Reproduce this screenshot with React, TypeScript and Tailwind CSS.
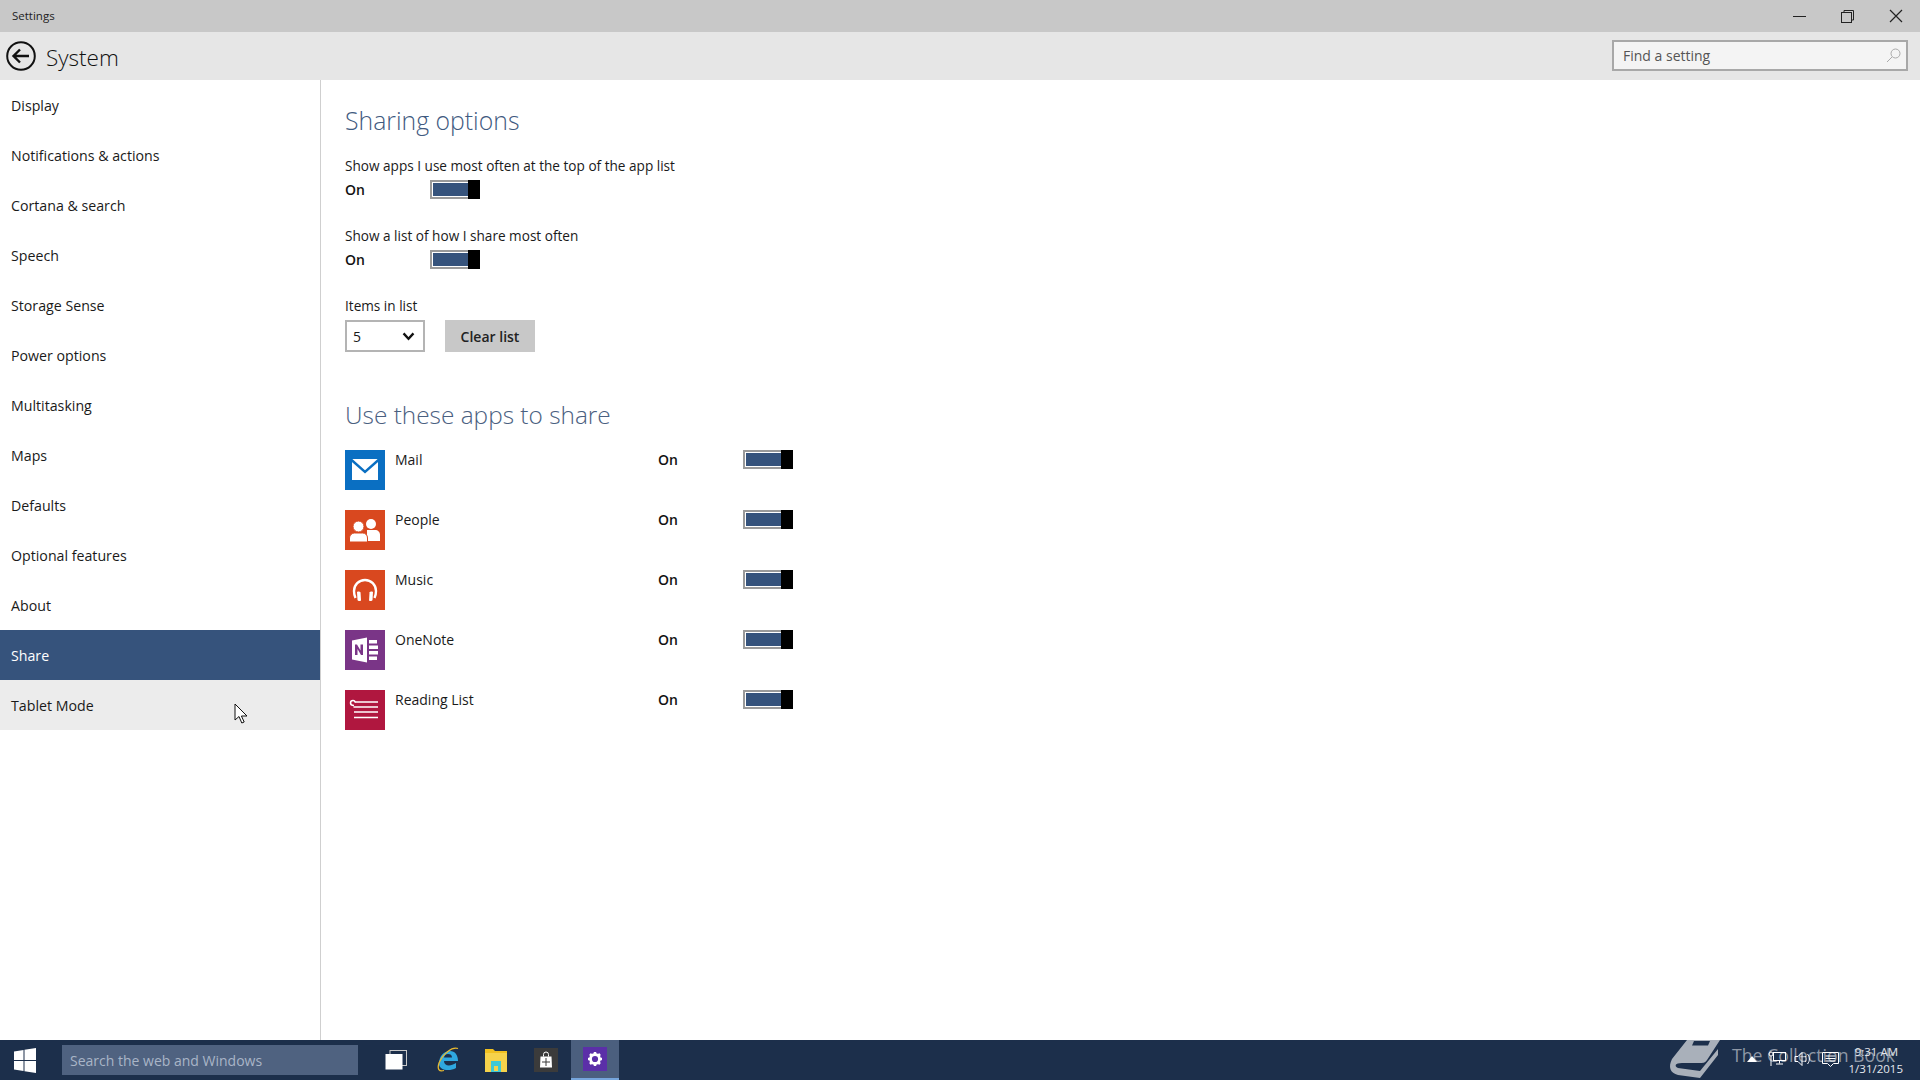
import React from "react";

const font = { fontFamily: '"Open Sans", "Noto Sans", sans-serif' };

const nav = ["Display","Notifications & actions","Cortana & search","Speech","Storage Sense","Power options","Multitasking","Maps","Defaults","Optional features","About","Share","Tablet Mode"];

function Toggle() {
  return (
    <div className="relative w-[50px] h-[19px] border-2 border-[#9a9a9a] bg-white p-[1px]">
      <div className="h-full w-full bg-[#36537c]" />
      <div className="absolute right-[-2px] top-[-2px] w-[12px] h-[19px] bg-black" />
    </div>
  );
}

function MailIcon() {
  return (
    <svg viewBox="0 0 40 40" className="w-10 h-10 block">
      <rect width="40" height="40" fill="#0a6fc2" />
      <rect x="7" y="9" width="26" height="21" fill="#fff" />
      <path d="M6 9.500l14 12.500 14-12.500" fill="none" stroke="#0a6fc2" strokeWidth="2.400" />
    </svg>
  );
}
function PeopleIcon() {
  return (
    <svg viewBox="0 0 40 40" className="w-10 h-10 block">
      <rect width="40" height="40" fill="#d9481f" />
      <circle cx="26" cy="14" r="5" fill="#fff" />
      <path d="M22 20h8c3 0 5 2 5 5v6H22z" fill="#fff" />
      <circle cx="13.500" cy="16.500" r="5.500" stroke="#d9481f" strokeWidth="1" fill="#fff" />
      <path d="M4.500 32v-4c0-3 2.500-5 5-5h8c3 0 5 2 5 5v4z" stroke="#d9481f" strokeWidth="1" fill="#fff" />
    </svg>
  );
}
function MusicIcon() {
  return (
    <svg viewBox="0 0 40 40" className="w-10 h-10 block">
      <rect width="40" height="40" fill="#d9481f" />
      <path d="M10.500 28c-1-2-1.500-4-1.500-7a11 11 0 0 1 22 0c0 3-.5 5-1.500 7" fill="none" stroke="#fff" strokeWidth="2.400" />
      <path d="M12 22c1.500-.8 3-.5 3.500.5l.5 8c-1.500 1-3 .5-3.500-.5z" fill="#fff" />
      <path d="M28 22c-1.500-.8-3-.5-3.500.5l-.5 8c1.500 1 3 .5 3.500-.5z" fill="#fff" />
    </svg>
  );
}
function OneNoteIcon() {
  return (
    <svg viewBox="0 0 40 40" className="w-10 h-10 block">
      <rect width="40" height="40" fill="#7a3587" />
      <path d="M7 10.500l15-3v25l-15-3z" fill="#fff" />
      <path d="M10 25V14.500h2l3.500 6v-6H18V25h-2l-3.500-6v6z" fill="#7a3587" />
      <path d="M24 10h8v3.500h-8zM24 15.500h9V19h-9zM24 21h9v3.500h-9zM24 26.500h8V30h-8z" fill="#fff" />
    </svg>
  );
}
function ReadingIcon() {
  return (
    <svg viewBox="0 0 40 40" className="w-10 h-10 block">
      <rect width="40" height="40" fill="#b0173f" />
      <path d="M10 12h23M8.500 17h24.500M9 22h24M9 27.500h24" stroke="#fff" strokeWidth="1.700" fill="none" />
      <path d="M9 15.500c-2 0-3.500-1-3.500-2.500s1.200-2.500 2.500-2.500 2 1 2 2" stroke="#fff" strokeWidth="1.500" fill="none" />
    </svg>
  );
}

const apps = [
  { name: "Mail", Icon: MailIcon },
  { name: "People", Icon: PeopleIcon },
  { name: "Music", Icon: MusicIcon },
  { name: "OneNote", Icon: OneNoteIcon },
  { name: "Reading List", Icon: ReadingIcon },
];

export default function App() {
  return (
    <div className="relative w-[1920px] h-[1080px] overflow-hidden bg-white flex flex-col text-[#1a1a1a]" style={font}>
      <div className="h-8 bg-[#c8c8c8] flex items-center pl-3 shrink-0">
        <span className="text-[11.5px] text-[#222]">Settings</span>
        <div className="ml-auto flex items-center pr-[17px] gap-[35px]">
          <svg width="14" height="14" viewBox="0 0 14 14"><path d="M1 7.500h13" stroke="#222" strokeWidth="1" /></svg>
          <svg width="13" height="13" viewBox="0 0 13 13" fill="none" stroke="#222"><rect x="0.500" y="2.500" width="10" height="10" /><path d="M3 2.500V.5h9.500V10H10.500" /></svg>
          <svg width="14" height="14" viewBox="0 0 14 14" fill="none" stroke="#222" strokeWidth="1.200"><path d="M1 1l12 12M13 1L1 13" /></svg>
        </div>
      </div>
      <div className="h-12 bg-[#e6e6e6] flex items-center shrink-0 pl-[5px]">
        <svg width="32" height="32" viewBox="0 0 32 32" fill="none" stroke="#111" strokeWidth="2"><circle cx="16" cy="16" r="13.800" /><path d="M24 16H9M15 9.500L8.500 16l6.500 6.500" strokeWidth="2.400" /></svg>
        <span className="ml-[9px] mt-[4px] text-[22.500px] font-light text-[#111]">System</span>
        <div className="ml-auto mr-[12px] mt-[-2px] w-[296px] h-[31px] border-2 border-[#a8a8a8] bg-[#f4f4f4] flex items-center pl-[9px] pr-[5px]">
          <span className="text-[14px] text-[#555]">Find a setting</span>
          <svg className="ml-auto" width="15" height="15" viewBox="0 0 15 15" fill="none" stroke="#aaa" strokeWidth="1"><circle cx="9.500" cy="5.500" r="4.500" /><path d="M6 9l-5 5" /></svg>
        </div>
      </div>
      <div className="flex-1 flex min-h-0">
        <nav className="w-[321px] border-r border-[#cfcfcf] shrink-0">
          {nav.map((n) => (
            <div
              key={n}
              className={
                "h-[50px] flex items-center pl-[11px] pr-2 pt-[2px] w-[320px] text-[14.200px] " +
                (n === "Share" ? "bg-[#36537c] text-white" : n === "Tablet Mode" ? "bg-[#ececec] text-[#1a1a1a]" : "text-[#1a1a1a]")
              }
            >
              {n}
            </div>
          ))}
        </nav>
        <main className="pl-[24px] flex flex-col items-start">
          <h2 className="mt-[21px] h-[38px] leading-[38px] text-[24.800px] font-light text-[#3f5a80]">Sharing options</h2>
          <div className="mt-[17px] h-[20px] leading-[20px] text-[13.600px]">Show apps I use most often at the top of the app list</div>
          <div className="mt-[4px] flex items-center h-[19px]">
            <span className="w-[85px] text-[14px] font-semibold text-[#111]">On</span>
            <Toggle />
          </div>
          <div className="mt-[27px] h-[20px] leading-[20px] text-[13.600px]">Show a list of how I share most often</div>
          <div className="mt-[4px] flex items-center h-[19px]">
            <span className="w-[85px] text-[14px] font-semibold text-[#111]">On</span>
            <Toggle />
          </div>
          <div className="mt-[27px] h-[20px] leading-[20px] text-[13.600px]">Items in list</div>
          <div className="mt-[4px] flex gap-[20px]">
            <div className="w-[80px] h-[32px] border-2 border-[#b4b4b4] flex items-center pl-[6px] pr-[8px] text-[14px]">
              5
              <svg className="ml-auto" width="13" height="9" viewBox="0 0 14 10" fill="none" stroke="#111" strokeWidth="2.600"><path d="M1.500 1.500L7 7.500l5.500-6" /></svg>
            </div>
            <div className="w-[90px] h-[32px] bg-[#c8c8c8] flex items-center justify-center text-[14px] font-semibold text-[#222]">Clear list</div>
          </div>
          <h2 className="mt-[44px] h-[38px] leading-[38px] text-[24.400px] font-light text-[#4a6080]">Use these apps to share</h2>
          <div className="mt-[16px] flex flex-col gap-[20px]">
            {apps.map(({ name, Icon }) => (
              <div key={name} className="flex h-[40px]">
                <Icon />
                <span className="ml-[10px] w-[263px] h-[20px] leading-[20px] text-[14px]">{name}</span>
                <span className="w-[85px] h-[20px] leading-[20px] text-[14px] font-semibold text-[#111]">On</span>
                <Toggle />
              </div>
            ))}
          </div>
        </main>
      </div>
      <div className="h-10 bg-[#1c2f4b] flex items-center shrink-0">
        <svg className="ml-[14px]" width="22" height="25" viewBox="0 0 22 25" fill="#fff"><path d="M0 3.500L9.500 2v10H0zM10.500 1.800L22 0v12H10.500zM0 13h9.500v10L0 21.500zM10.500 13H22v12l-11.500-1.800z" /></svg>
        <div className="ml-[26px] w-[296px] h-[30px] bg-[#4f6280] flex items-center pl-[8px] text-[14px] text-[#a9b5c7]">Search the web and Windows</div>
        <div className="ml-[27px] flex items-center">
          <svg width="22" height="20" viewBox="0 0 22 20"><rect x="5" y="0.500" width="16.500" height="15" fill="#1c2f4b" stroke="#c9c9c9" /><rect x="0.500" y="4" width="17" height="15.500" fill="#fff" /></svg>
          <svg className="ml-[29px]" width="24" height="26" viewBox="0 0 24 26" fill="none"><path d="M3 17c0-8 5-13 11-13 5 0 8 4 8 10H8c0 5 6 6 12 2v5c-7 4-17 2-17-4zM8 10.500H16c0-2.500-1.500-3.500-4-3.500s-3.500 1.500-4 3.500z" fill="#2fa8e0" fillRule="evenodd" /><path d="M22 1.500c-6-2-15 5-19 14.500-2 6 0 9 5 7.500" stroke="#e8b930" strokeWidth="1.300" /></svg>
          <svg className="ml-[25px]" width="22" height="24" viewBox="0 0 22 24"><path d="M0 1h8l2 2h12v5H0z" fill="#f0c020" /><rect y="5" width="22" height="19" fill="#f5d24b" /><rect x="6" y="13" width="10" height="11" fill="#3fc9d6" /><rect x="9" y="18" width="4" height="5" fill="#f5d24b" /></svg>
          <svg className="ml-[27px]" width="24" height="24" viewBox="0 0 24 24"><rect width="24" height="24" fill="#3b3b3b" /><path d="M6.500 8.500h11l.5 11H6z" fill="#fff" /><path d="M9.500 8.500V6.500a2.500 2.500 0 0 1 5 0v2" fill="none" stroke="#fff" /><path d="M12 10v8M8 14h8" stroke="#3b3b3b" strokeWidth="1" fill="none" /></svg>
          <div className="ml-[13px] w-[48px] h-10 bg-[#4b5f7e] border-b-[2px] border-[#76a5dc] flex items-center justify-center">
            <svg width="24" height="24" viewBox="0 0 24 24"><rect width="24" height="24" fill="#5b2fa8" /><circle cx="12" cy="12" r="4.500" fill="none" stroke="#fff" strokeWidth="2.800" /><path d="M12 5v3M12 16v3M5 12h3M16 12h3M7 7l2 2M15 15l2 2M17 7l-2 2M9 15l-2 2" stroke="#fff" strokeWidth="2.500" /></svg>
          </div>
        </div>
      </div>
      {/* watermark */}
      <div className="absolute left-[1660px] top-[1035px] flex items-center pointer-events-none">
        <svg width="60" height="45" viewBox="0 0 60 45">
          <path d="M27 5H60L47 25C45 28 43 28 40 28H22C15 28 14 31 18 33L40 36 58 14V20L40 43 18 40C10 38 8 32 12 24Z" fill="#a9b0ba" />
          <path d="M34 6H50L48 10.500H32Z" fill="#1c2f4b" />
        </svg>
        <span className="ml-[12px] mt-[-4px] text-[17.700px] text-[#8f98a6]">The Collection Book</span>
      </div>
      {/* tray icons over the taskbar */}
      <div className="absolute left-[1746px] top-[1050px] flex items-center">
        <svg width="12" height="8" viewBox="0 0 12 8" fill="#fff"><path d="M6 1l5 6H1z" /></svg>
        <svg className="ml-[10px]" width="18" height="18" viewBox="0 0 18 18" fill="none" stroke="#fff"><rect x="5.500" y="2.500" width="12" height="8" /><path d="M11.500 10.500v3M8 14h7M3 6v10" /><circle cx="3" cy="4" r="2" /></svg>
        <svg className="ml-[8px]" width="18" height="18" viewBox="0 0 18 18" fill="none" stroke="#fff"><path d="M1 6.500h3l4-4v13l-4-4H1zM11 6c1.500 2 1.500 4 0 6M13.500 4c2.500 3 2.500 7 0 10" /></svg>
        <svg className="ml-[10px]" width="17" height="17" viewBox="0 0 17 17" fill="none" stroke="#fff"><path d="M.5 1.500h16v11h-5l-3 3-3-3h-5zM3.500 5h10M3.500 7.500h10M3.500 10h10" /></svg>
      </div>
      {/* clock, over the watermark */}
      <div className="absolute right-[17px] top-[1043px] flex flex-col items-end text-[11.500px] leading-[17px] text-[#e4e8ee]">
        <span className="pr-[5px]">9:31 AM</span>
        <span>1/31/2015</span>
      </div>
      {/* pointer */}
      <svg className="absolute left-[234px] top-[703px]" width="14" height="21" viewBox="0 0 14 21"><path d="M1 1v16l4-3.500L7.800 20l2.400-1-2.800-6H13z" fill="#fff" stroke="#111" strokeWidth="1" /></svg>
    </div>
  );
}
